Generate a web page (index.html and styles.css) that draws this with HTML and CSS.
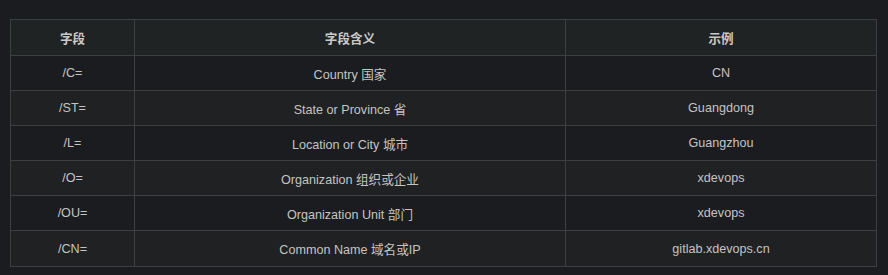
FILE: index.html
```html
<!DOCTYPE html>
<html lang="zh">
<head>
<meta charset="utf-8">
<link rel="stylesheet" href="styles.css">
</head>
<body>
<div class="wrap">
<table class="fields">
  <colgroup>
    <col class="c1"><col class="c2"><col class="c3">
  </colgroup>
  <thead>
    <tr><th>字段</th><th>字段含义</th><th>示例</th></tr>
  </thead>
  <tbody>
    <tr><td>/C=</td><td>Country 国家</td><td>CN</td></tr>
    <tr><td>/ST=</td><td>State or Province 省</td><td>Guangdong</td></tr>
    <tr><td>/L=</td><td>Location or City 城市</td><td>Guangzhou</td></tr>
    <tr><td>/O=</td><td>Organization 组织或企业</td><td>xdevops</td></tr>
    <tr><td>/OU=</td><td>Organization Unit 部门</td><td>xdevops</td></tr>
    <tr><td>/CN=</td><td>Common Name 域名或IP</td><td>gitlab.xdevops.cn</td></tr>
  </tbody>
</table>
</div>
</body>
</html>
```

FILE: styles.css
```css
html, body {
  margin: 0;
  padding: 0;
  background: #1b1c1f;
}
body {
  font-family: "Liberation Sans", Arial, "Noto Sans CJK SC", sans-serif;
  font-size: 12.6px;
  color: #c4c4c4;
}
.wrap {
  padding: 19px 0 0 10px;
}
.fields {
  border-collapse: collapse;
  width: 866px;
  table-layout: fixed;
}
.c1 { width: 124px; }
.c2 { width: 431px; }
.c3 { width: 311px; }
.fields th,
.fields td {
  border: 1px solid #3e3f41;
  text-align: center;
  padding: 0;
}
.fields th {
  background: #202324;
  height: 35px;
  font-weight: bold;
  color: #c9c9c9;
}
.fields td {
  height: 34px;
}
.fields tbody tr:nth-child(even) td {
  background: #202123;
}
.fields tbody tr:last-child td {
  height: 35px;
}
```
